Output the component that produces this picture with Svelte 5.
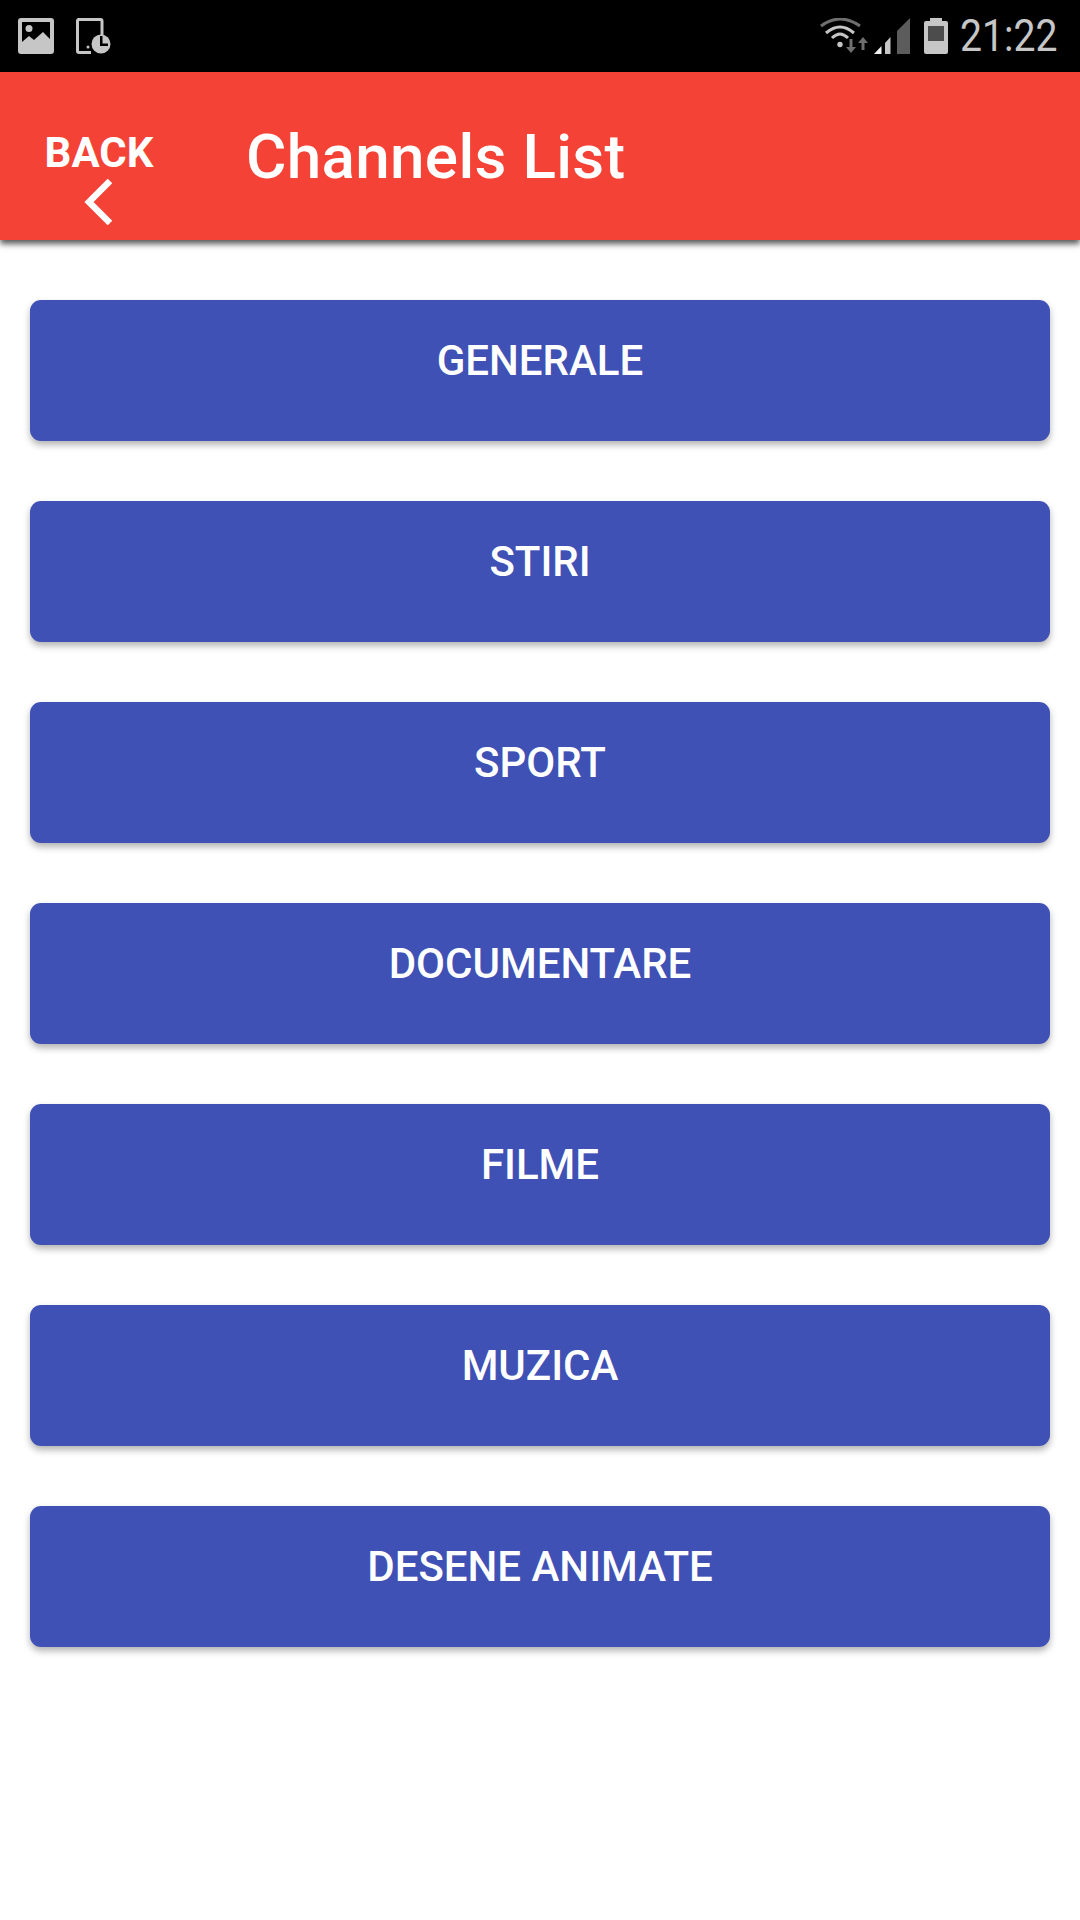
<script>
  const channels = ['GENERALE', 'STIRI', 'SPORT', 'DOCUMENTARE', 'FILME', 'MUZICA', 'DESENE ANIMATE'];
</script>

<div class="screen">
  <div class="statusbar">
    <div class="notifs">
      <svg width="36" height="36" viewBox="0 0 36 36">
        <path fill-rule="evenodd" fill="#c6c6c6" d="M3 0h30a3 3 0 0 1 3 3v30a3 3 0 0 1-3 3H3a3 3 0 0 1-3-3V3a3 3 0 0 1 3-3zM4 4v20l7-6 5 4 9-8 7 7V4z"/>
        <circle cx="11" cy="10.500" r="3.500" fill="#c6c6c6"/>
      </svg>
      <svg width="36" height="36" viewBox="0 0 36 36">
        <path fill="none" stroke="#c6c6c6" stroke-width="3" d="M26 18V3a1.500 1.500 0 0 0-1.500-1.500h-22A1.500 1.500 0 0 0 1.500 3v30A1.500 1.500 0 0 0 3 34.500h12"/>
        <circle cx="12" cy="29" r="1.500" fill="#c6c6c6"/>
        <circle cx="25" cy="26" r="9.500" fill="#c6c6c6"/>
        <path fill="#000" d="M25 20h2.500v7.500H33V30h-8z" transform="translate(-1 -2)"/>
      </svg>
    </div>
    <div class="sysicons">
      <svg width="48" height="36" viewBox="0 0 48 36">
        <g fill="none" stroke-width="3">
          <path stroke="#6e6e6e" d="M1 8Q20-6 40 8"/>
          <path stroke="#c6c6c6" d="M6 15Q20 3 34 15"/>
          <path stroke="#c6c6c6" d="M12 20Q20 12 28 20"/>
        </g>
        <circle cx="20" cy="26.500" r="2.700" fill="#c6c6c6"/>
        <path fill="#6e6e6e" d="M29.500 21h3v8h3.500l-5 6-5-6h3.500zM41.500 32v-7h-3.500l5-6 5 6h-3.500v7z"/>
      </svg>
      <svg class="signal" width="36" height="36" viewBox="0 0 36 36">
        <path fill="#f0f0f0" d="M0 36 7.500 28v8z"/>
        <path fill="#c6c6c6" d="M11 36V25l5.500-6v17z"/>
        <path fill="#5c5c5c" d="M23 36V13L36 0v36z"/>
      </svg>
      <svg class="battery" width="24" height="36" viewBox="0 0 24 36">
        <path fill="#c6c6c6" d="M6 0h12v3h4a2 2 0 0 1 2 2v29a2 2 0 0 1-2 2H2a2 2 0 0 1-2-2V5a2 2 0 0 1 2-2h4z"/>
        <rect x="4" y="8" width="16" height="15" fill="#4c4c4c"/>
      </svg>
      <span class="clock">21:22</span>
    </div>
  </div>

  <header>
    <div class="back">
      <span>BACK</span>
      <svg width="28" height="46" viewBox="0 0 28 46">
        <path fill="none" stroke="#fff" stroke-width="6.500" d="M26 2 5 23l21 21"/>
      </svg>
    </div>
    <h1>Channels List</h1>
  </header>

  <main>
    {#each channels as name}
      <button>{name}</button>
    {/each}
  </main>
</div>

<style>
  :global(body) {
    margin: 0;
    background: #fff;
  }
  .screen {
    width: 1080px;
    height: 1920px;
    overflow: hidden;
    font-family: Roboto, "Liberation Sans", sans-serif;
  }
  .statusbar {
    height: 72px;
    background: #000;
    display: flex;
    justify-content: space-between;
    align-items: center;
    padding: 0 25px 0 18px;
    box-sizing: border-box;
  }
  .notifs {
    display: flex;
    align-items: center;
    gap: 22px;
  }
  .sysicons {
    display: flex;
    align-items: center;
    height: 36px;
  }
  .signal {
    margin-left: 6px;
  }
  .battery {
    margin-left: 14px;
  }
  .clock {
    width: 95px;
    margin-left: 12px;
    color: #c6c6c6;
    font-size: 45px;
    line-height: 36px;
    white-space: nowrap;
    transform: scaleX(0.87);
    transform-origin: left;
  }
  header {
    position: relative;
    height: 168px;
    background: #f44336;
    display: flex;
    align-items: center;
    padding-left: 45px;
    box-shadow: 0 4px 6px rgba(0, 0, 0, 0.65);
  }
  .back {
    width: 108px;
    display: flex;
    flex-direction: column;
    align-items: center;
    color: #fff;
    font-size: 42px;
    font-weight: 700;
    line-height: 44px;
    margin-top: 44px;
  }
  .back svg {
    margin-top: 4px;
    margin-left: -2px;
  }
  h1 {
    margin: 0 0 0 93px;
    color: #fff;
    font-size: 62px;
    font-weight: 500;
    letter-spacing: 0.3px;
  }
  main {
    display: flex;
    flex-direction: column;
    gap: 60px;
    padding: 60px 30px 0;
  }
  button {
    height: 141px;
    border: 0;
    border-radius: 11px;
    background: #3f51b5;
    color: #fff;
    font-family: inherit;
    font-size: 42px;
    font-weight: 500;
    padding: 0 0 20px;
    box-shadow: 0 4px 7px rgba(0, 0, 0, 0.3);
  }
</style>
